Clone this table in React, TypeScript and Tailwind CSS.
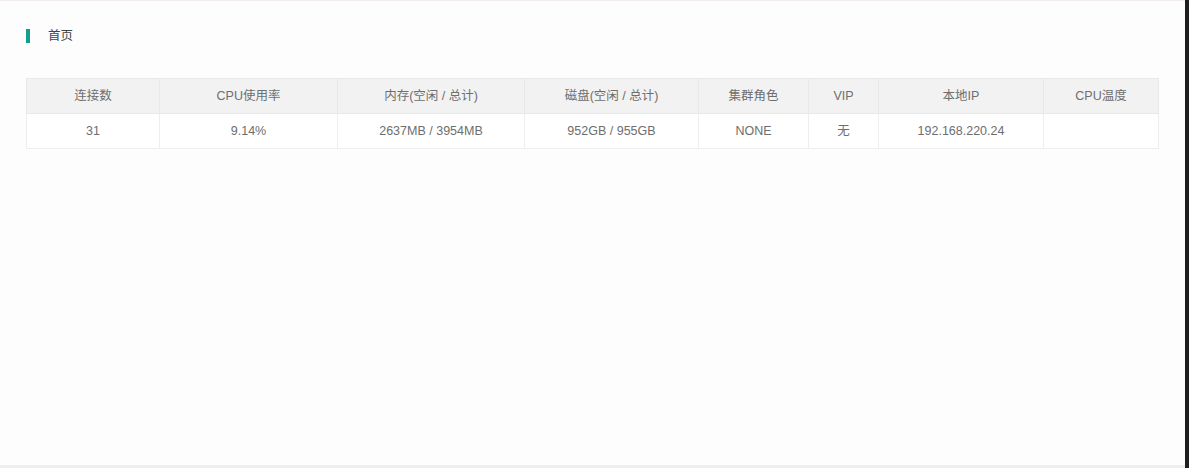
import React from "react";

const cols = [
  { h: "连接数", v: "31", w: 133 },
  { h: "CPU使用率", v: "9.14%", w: 178 },
  { h: "内存(空闲 / 总计)", v: "2637MB / 3954MB", w: 187 },
  { h: "磁盘(空闲 / 总计)", v: "952GB / 955GB", w: 174 },
  { h: "集群角色", v: "NONE", w: 110 },
  { h: "VIP", v: "无", w: 70 },
  { h: "本地IP", v: "192.168.220.24", w: 165 },
  { h: "CPU温度", v: "", w: 115 },
];

export default function App() {
  return (
    <div
      className="flex h-[468px] w-[1189px] overflow-hidden bg-white text-[12.5px]"
      style={{ fontFamily: '"Liberation Sans", Arial, "Noto Sans CJK SC", sans-serif' }}
    >
      <div className="flex flex-1 flex-col">
        <div className="h-px bg-[#f3ecec]" />
        <div className="flex flex-1 flex-col bg-[#fdfdfd] pl-[26px] pr-[26px]">
          <div className="mt-[27px] flex h-[15px] items-center">
            <div className="h-[14px] w-[4px] bg-[#12a08c]" />
            <span className="ml-[18px] pt-[2px] leading-none text-[#444]">首页</span>
          </div>
          <table className="mt-[35px] w-[1132px] table-fixed border-collapse border border-[#ececec] text-center">
            <colgroup>
              {cols.map((c, i) => (
                <col key={i} style={{ width: c.w }} />
              ))}
            </colgroup>
            <thead>
              <tr className="h-[35px] bg-[#f2f2f2]">
                {cols.map((c, i) => (
                  <th key={i} className="border border-[#e8e8e8] font-normal text-[#6e6e6e]">
                    {c.h}
                  </th>
                ))}
              </tr>
            </thead>
            <tbody>
              <tr className="h-[35px] bg-white">
                {cols.map((c, i) => (
                  <td key={i} className="border border-[#eeeeee] text-[#6e6e6e]">
                    {c.v}
                  </td>
                ))}
              </tr>
            </tbody>
          </table>
        </div>
        <div className="h-[3px] bg-[#eeeeee]" />
      </div>
      <div className="w-[5px] bg-[#1e1e1e]" />
    </div>
  );
}
